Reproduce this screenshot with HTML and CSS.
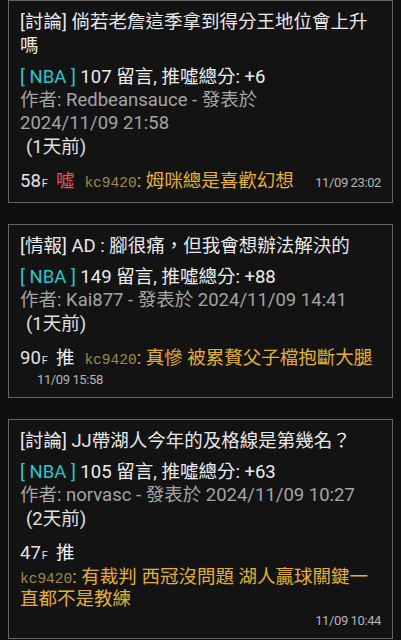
FILE: index.html
```html
<!DOCTYPE html>
<html lang="zh-Hant">
<head>
<meta charset="utf-8">
<link rel="stylesheet" href="styles.css">
</head>
<body>
<div class="list">
  <div class="card">
    <div class="title">[討論] 倘若老詹這季拿到得分王地位會上升嗎</div>
    <div class="meta"><span class="board">[ NBA ]</span> 107 留言, 推噓總分: +6</div>
    <div class="author">作者: Redbeansauce - 發表於<br>2024/11/09 21:58</div>
    <div class="ago">(1天前)</div>
    <div class="push">
      <span class="floor">58<small>F</small></span>
      <span class="tag boo">噓</span>
      <span class="content"><span class="uid">kc9420</span>: 姆咪總是喜歡幻想</span>
      <span class="time">11/09 23:02</span>
    </div>
  </div>

  <div class="card">
    <div class="title">[情報] AD : 腳很痛，但我會想辦法解決的</div>
    <div class="meta"><span class="board">[ NBA ]</span> 149 留言, 推噓總分: +88</div>
    <div class="author">作者: Kai877 - 發表於 2024/11/09 14:41</div>
    <div class="ago">(1天前)</div>
    <div class="push">
      <span class="floor">90<small>F</small></span>
      <span class="tag">推</span>
      <span class="content"><span class="uid">kc9420</span>: 真慘 被累贅父子檔抱斷大腿</span>
    </div>
    <div class="time time-left">11/09 15:58</div>
  </div>

  <div class="card">
    <div class="title">[討論] JJ帶湖人今年的及格線是第幾名？</div>
    <div class="meta"><span class="board">[ NBA ]</span> 105 留言, 推噓總分: +63</div>
    <div class="author">作者: norvasc - 發表於 2024/11/09 10:27</div>
    <div class="ago">(2天前)</div>
    <div class="push">
      <span class="floor">47<small>F</small></span>
      <span class="tag">推</span>
    </div>
    <div class="content block"><span class="uid">kc9420</span>: 有裁判 西冠沒問題 湖人贏球關鍵一直都不是教練</div>
    <div class="time time-right">11/09 10:44</div>
  </div>
</div>
</body>
</html>
```

FILE: styles.css
```css
html, body {
  margin: 0;
  padding: 0;
  background: #0d0f11;
}
body {
  font-family: Roboto, "Noto Sans CJK TC", sans-serif;
  font-size: 18.5px;
  color: #e6e6e6;
}
.list {
  display: flex;
  flex-direction: column;
  gap: 21px;
  padding: 0 8px;
}
.card {
  background: #131313;
  border: 1px solid #666;
  padding: 9px 11px 8px;
}
.title {
  line-height: 24px;
  color: #e8e8e8;
  margin-bottom: 7px;
}
.meta {
  line-height: 24px;
  color: #ececec;
}
.board {
  color: #28c6d0;
}
.author {
  line-height: 23px;
  color: #a4a4a4;
}
.ago {
  line-height: 24px;
  color: #e0e0e0;
  padding-left: 6px;
}
.push {
  display: flex;
  align-items: baseline;
  margin-top: 9px;
  height: 26px;
  line-height: 26px;
}
.floor {
  color: #e4e4e4;
}
.floor small {
  font-size: 11px;
  line-height: 1;
  margin-left: 1px;
}
.tag {
  color: #f0f0f0;
  margin-left: 8px;
  margin-right: 10px;
}
.tag.boo {
  color: #e25454;
}
.content {
  color: #e3b030;
}
.content.block {
  line-height: 22px;
}
.uid {
  font-family: "Liberation Mono", "DejaVu Sans Mono", monospace;
  font-size: 14.5px;
  line-height: 1;
  color: #9d8a45;
}
.time {
  font-size: 13px;
  line-height: 18px;
  letter-spacing: -0.4px;
  color: #b4b4b4;
  margin-left: auto;
}
.time-left {
  padding-left: 17px;
  height: 18px;
}
.time-right {
  text-align: right;
  height: 18px;
  padding-top: 2px;
}
```
